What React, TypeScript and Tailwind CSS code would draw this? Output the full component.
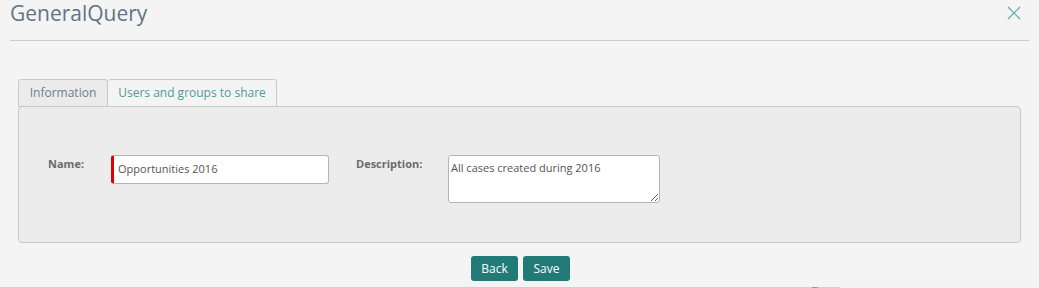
import React from "react";

export default function App() {
  return (
    <div className="w-[1039px] h-[288px] bg-[#f4f4f4] relative overflow-hidden" style={{ fontFamily: '"Open Sans", sans-serif' }}>
      <div className="mx-[10px] h-[41px] border-b border-[#cccccc] flex items-start justify-between">
        <div className="text-[21px] leading-[26px] text-[#5f7486]">GeneralQuery</div>
        <svg width="14" height="14" viewBox="0 0 14 14" className="mt-[6px] mr-[8px]">
          <path d="M1 1 L13 13 M13 1 L1 13" stroke="#5fa9a8" strokeWidth="1.2" />
        </svg>
      </div>
      <div className="mx-[18px] mt-[38px]">
        <div className="flex h-[28px]">
          <div className="w-[90px] border border-[#c9c9c9] bg-[#ebebeb] rounded-t-[3px] text-[12px] text-[#6a7e8f] flex items-center justify-center">Information</div>
          <div className="w-[169px] border border-l-0 border-[#c9c9c9] bg-[#f4f4f4] rounded-t-[3px] text-[12px] text-[#4e9b98] flex items-center justify-center">Users and groups to share</div>
        </div>
        <div className="h-[137px] -mt-px border border-[#c8c8c8] rounded-[4px] bg-[#ececec] flex items-start pt-[48px]">
          <div className="w-[92px] pl-[29px] pt-[1px] text-[11px] font-bold text-[#6b6b6b]">Name:</div>
          <div className="w-[218px] h-[29px] bg-white border border-[#b5b5b5] rounded-[3px] border-l-[3px] border-l-[#e00000] flex items-center pl-[4px] text-[11px] text-[#555]">Opportunities 2016</div>
          <div className="w-[119px] pl-[27px] pt-[1px] text-[11px] font-bold text-[#6b6b6b]">Description:</div>
          <textarea
            readOnly
            defaultValue="All cases created during 2016"
            className="w-[212px] h-[48px] bg-white border border-[#b5b5b5] rounded-[3px] px-[2px] py-[4px] text-[11px] leading-[16px] text-[#555] outline-none resize"
            style={{ fontFamily: '"Open Sans", sans-serif' }}
          />
        </div>
      </div>
      <div className="flex justify-center gap-[5px] mt-[13px] pl-[2px]">
        <button className="w-[47px] h-[25px] bg-[#217a78] text-white text-[12px] rounded-[3px]">Back</button>
        <button className="w-[47px] h-[25px] bg-[#217a78] text-white text-[12px] rounded-[3px]">Save</button>
      </div>
      <div className="absolute left-0 bottom-0 w-[840px] h-px bg-[#d0d0d0]">
        <div className="absolute left-[812px] w-[6px] h-px bg-[#999]" />
      </div>
    </div>
  );
}
